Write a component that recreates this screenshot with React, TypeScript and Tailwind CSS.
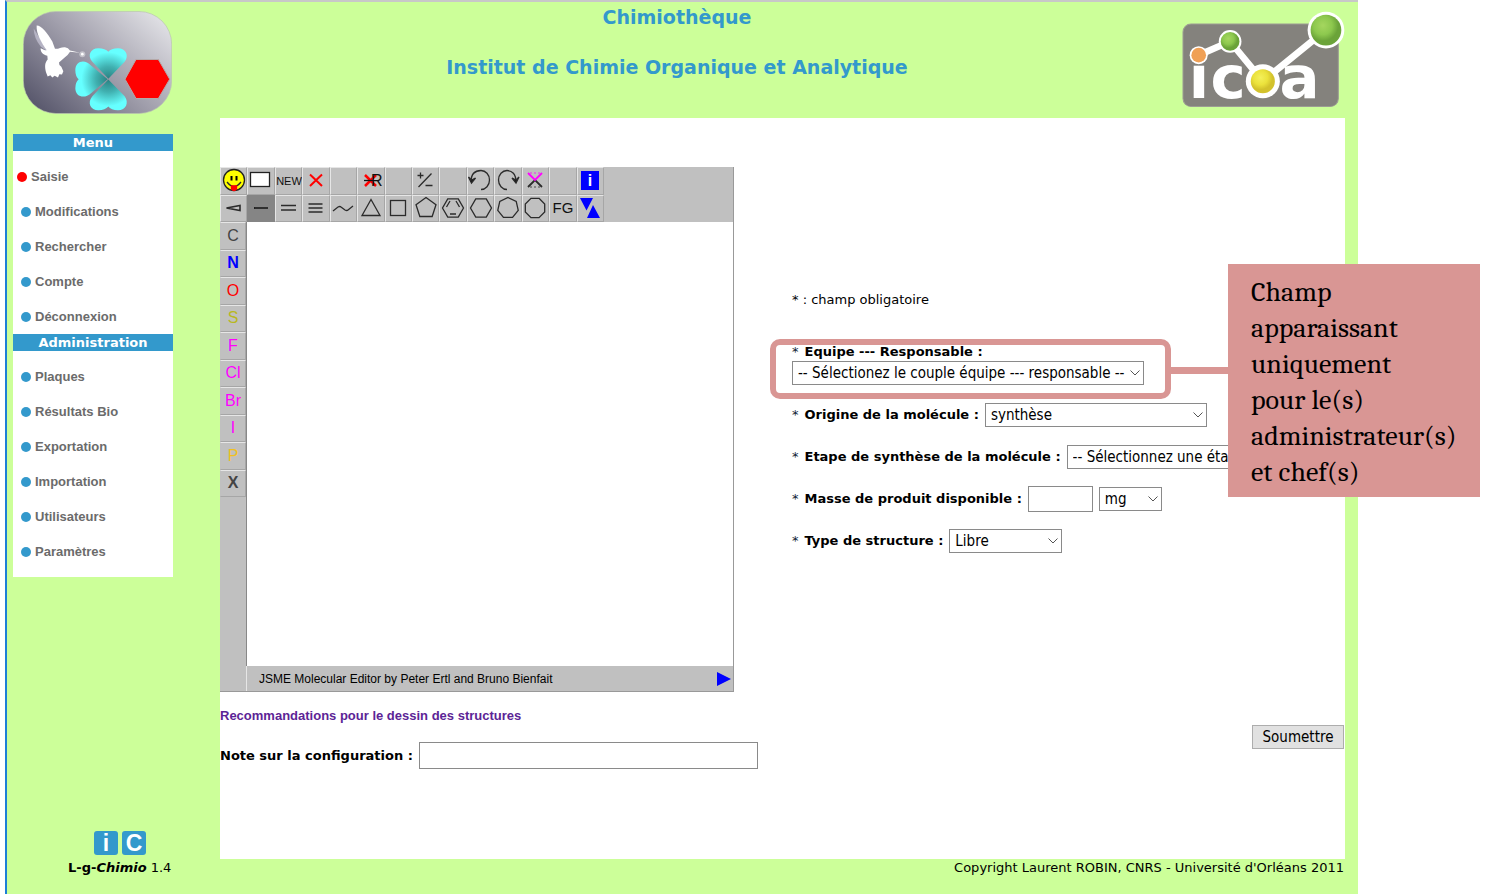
import type { ReactNode } from 'react';

const menuItems = ['Saisie', 'Modifications', 'Rechercher', 'Compte', 'Déconnexion'];
const adminItems = ['Plaques', 'Résultats Bio', 'Exportation', 'Importation', 'Utilisateurs', 'Paramètres'];

function BirdLogo() {
  return (
    <svg viewBox="69 36 447 308" className="h-[103px] w-[149px] shrink-0" role="img" aria-label="L-g-Chimio">
      <defs>
        <linearGradient id="plate" x1="0" y1="0.85" x2="1" y2="0.1">
          <stop offset="0" stopColor="#57566b" />
          <stop offset="0.5" stopColor="#a19fac" />
          <stop offset="1" stopColor="#e4e4e8" />
        </linearGradient>
        <radialGradient id="leaf" gradientUnits="userSpaceOnUse" cx="325" cy="240" r="95">
          <stop offset="0" stopColor="#2a7f80" />
          <stop offset="0.4" stopColor="#40b0b0" />
          <stop offset="0.85" stopColor="#66ffff" />
        </radialGradient>
      </defs>
      <rect x="70" y="37" width="445" height="306" rx="98" fill="url(#plate)" stroke="#b9c4b0" strokeWidth="2" />
      <path d="M101 88 Q102 118 122 142 L143 158 L116 112Z" fill="#b5b3c4" />
      <path
        d="M110 79 C122 78 143 101 157 127 L165 149 C177 150 183 143 195 144 Q205 145 210 154 L240 161 L210 158 Q203 170 194 175 L177 190 Q176 198 184 203 L190 216 L186 226 L178 225 L174 235 L164 230 L157 235 L151 228 L143 232 L138 219 C134 203 134 191 143 181 L142 170 C127 165 121 157 122 147 C130 151 136 154 140 153 C124 130 108 103 110 79Z"
        fill="#fff"
      />
      <circle cx="247" cy="165" r="9" fill="#fff" opacity="0.4" />
      <circle cx="247" cy="165" r="4" fill="#fff" />
      <g fill="url(#leaf)">
        <path d="M325 239 L277 188 C261 169 271 147 295 147 Q316 147 325 158 Q333 147 354 147 C378 147 388 169 374 188Z" />
        <path d="M325 241 L277 291 C261 310 271 333 295 333 Q316 333 325 322 Q333 333 354 333 C378 333 388 310 374 291Z" />
        <path d="M323 240 L273 199 C253 178 226 187 226 213 Q226 231 236 240 Q226 249 226 267 C226 292 253 301 273 282Z" />
      </g>
      <path d="M375 240 L408 181 H475 L509 240 L475 298 H408Z" fill="#f00" stroke="#b4a8a8" strokeWidth="3" />
    </svg>
  );
}

function IcoaLogo() {
  return (
    <svg viewBox="38 33 488 305" className="h-[102px] w-[163px] shrink-0" role="img" aria-label="ICOA">
      <defs>
        <radialGradient id="green" cx="0.4" cy="0.35"><stop offset="0" stopColor="#a5d65f" /><stop offset="0.6" stopColor="#8dc84e" /><stop offset="1" stopColor="#6ba339" /></radialGradient>
        <radialGradient id="yellow" cx="0.4" cy="0.35"><stop offset="0" stopColor="#f4f05a" /><stop offset="0.6" stopColor="#ebe23c" /><stop offset="1" stopColor="#d3c22c" /></radialGradient>
      </defs>
      <rect x="41" y="72" width="465" height="247" rx="24" fill="#84827d" stroke="#9c9c93" strokeWidth="3" />
      <g fill="#fff" fontFamily="DejaVu Sans" fontWeight="700" fontSize="178">
        <text x="58" y="292">i</text>
        <text x="123" y="292">c</text>
        <text x="330" y="292">a</text>
      </g>
      <path d="M88 165 L182 124 L280 243 L468 90" fill="none" stroke="#fff" strokeWidth="20" />
      <g fill="#fff">
        <circle cx="88" cy="165" r="27" />
        <circle cx="182" cy="124" r="34" />
        <circle cx="280" cy="243" r="51" />
        <circle cx="469" cy="90" r="55" />
      </g>
      <circle cx="88" cy="165" r="22" fill="#f0a055" />
      <circle cx="182" cy="124" r="28" fill="url(#green)" />
      <circle cx="280" cy="243" r="36" fill="url(#yellow)" />
      <circle cx="469" cy="90" r="46" fill="url(#green)" />
    </svg>
  );
}

function Ring({ sides, radius, turn = 0 }: { sides: number; radius: number; turn?: number }) {
  const points = Array.from({ length: sides }, (_, k) => {
    const a = ((turn + (360 * k) / sides - 90) * Math.PI) / 180;
    return `${(13 + radius * Math.cos(a)).toFixed(2)},${(13 + radius * Math.sin(a)).toFixed(2)}`;
  }).join(' ');
  return <polygon points={points} />;
}

const tools: { name: string; art: ReactNode }[] = [
  {
    name: 'Smiley',
    art: (
      <>
        <circle cx="13" cy="13" r="10.5" fill="#ff0" stroke="#222" />
        <path d="M10.5 9v4.500M15.500 9v4.500" strokeWidth="2" stroke="#000" />
        <path d="M6 15q7 9 14 0" />
        <path d="M10.500 19h5v3q-2.500 3-5 0z" fill="#f00" stroke="#f00" />
      </>
    ),
  },
  { name: 'Effacer la zone', art: <rect x="2.500" y="5.500" width="19" height="14" fill="#fff" stroke="#222" /> },
  { name: 'Nouveau', art: <text x="13" y="18" textAnchor="middle" fontSize="11" fill="#111" stroke="none">NEW</text> },
  { name: 'Supprimer', art: <path d="M7 7.500l12 11.500M19 7.500l-12 11.500" stroke="#f00" strokeWidth="2" /> },
  { name: 'Vide 1', art: null },
  {
    name: 'Supprimer R',
    art: (
      <>
        <path d="M7 8l11 11M18 8L7 19" stroke="#f00" strokeWidth="2.500" />
        <path d="M6 13.500h9" stroke="#111" />
        <text x="13" y="19" fontSize="16" fill="#111" stroke="none">R</text>
      </>
    ),
  },
  { name: 'Vide 2', art: null },
  { name: 'Charge', art: <path d="M4.500 8.500h6M7.500 5.500v6M18.500 6.500L5.500 20M12.500 18.500h7" /> },
  { name: 'Vide 3', art: null },
  { name: 'Annuler', art: <><path d="M3 15C3 7 7 3.500 13 3.500a8.500 9.500 0 0 1 0 19" /><path d="M0.500 10l3 6 4-5-4 2z" fill="#111" /></> },
  { name: 'Rétablir', art: <><path d="M21 15C21 7 17 3.500 12 3.500a8.500 9.500 0 0 0 0 19" /><path d="M24 10l-3 6-4-5 4 2z" fill="#111" /></> },
  { name: 'Spiro', art: <><path d="M6 20l7-7 7 7" strokeWidth="1.800" /><path d="M6 6l7 7 7-7" stroke="#f0f" strokeWidth="1.800" /><path d="M8 6h10" stroke="#f0f" strokeDasharray="2 2" strokeWidth="0.8" /><path d="M8 20h10" strokeDasharray="2 2" strokeWidth="0.8" /></> },
  { name: 'Vide 4', art: null },
  { name: 'Informations', art: <><rect x="4" y="4" width="18" height="19" fill="#00f" stroke="none" /><text x="13" y="19" textAnchor="middle" fontSize="16" fontWeight="700" fill="#fff" stroke="none">i</text></> },
  { name: 'Liaison stéréo', art: <path d="M5.500 13L19 10.500v5z" strokeWidth="1.600" /> },
  { name: 'Liaison simple', art: <path d="M6 13h14" stroke="#000" /> },
  { name: 'Liaison double', art: <path d="M5 10.500h15M5 15h15" /> },
  { name: 'Liaison triple', art: <path d="M5.500 9h14M5.500 13h14M5.500 17h14" /> },
  { name: 'Chaîne', art: <path d="M3 16l5-4q2-1 3 0l4 3q2 1 3 0l5-4" /> },
  { name: 'Cyclopropane', art: <path d="M13 4.500L22 20.500h-18z" /> },
  { name: 'Cyclobutane', art: <rect x="5.500" y="5.500" width="15" height="15" /> },
  { name: 'Cyclopentane', art: <Ring sides={5} radius={10.5} /> },
  { name: 'Benzène', art: <><Ring sides={6} radius={10.5} turn={30} /><path d="M6.500 12l3.500-6M16 6l3.500 6M10 19h6" /></> },
  { name: 'Cyclohexane', art: <Ring sides={6} radius={10.5} turn={30} /> },
  { name: 'Cycloheptane', art: <Ring sides={7} radius={10.5} /> },
  { name: 'Cyclooctane', art: <Ring sides={8} radius={10.5} turn={22.5} /> },
  { name: 'Groupe fonctionnel', art: <text x="13" y="18" textAnchor="middle" fontSize="15" fill="#111" stroke="none">FG</text> },
  { name: 'Transfert', art: <path d="M3 3h13L9.500 15.500zM16 10l7 13H10z" fill="#00f" stroke="none" /> },
];

function Tool({ name, art, active }: { name: string; art: ReactNode; active: boolean }) {
  return (
    <button
      type="button"
      aria-label={name}
      className={
        active
          ? 'flex items-center justify-center bg-[#858585]'
          : 'flex items-center justify-center border border-t-[#e6e6e6] border-l-[#e6e6e6] border-r-[#a6a6a6] border-b-[#a6a6a6] bg-[#c0c0c0]'
      }
    >
      <svg viewBox="0 0 26 27" className="h-[27px] w-[26px] shrink-0 font-['Liberation_Sans',sans-serif]" fill="none" stroke="#2b2b2b" strokeWidth="1.3">
        {art}
      </svg>
    </button>
  );
}

function Atom({ symbol, tone }: { symbol: string; tone: string }) {
  return (
    <button
      type="button"
      className={`flex items-center justify-center border border-t-[#e6e6e6] border-l-[#c0c0c0] border-r-[#a6a6a6] border-b-[#a6a6a6] font-['Liberation_Sans',sans-serif] text-base leading-4 ${tone}`}
    >
      {symbol}
    </button>
  );
}

function Editor() {
  return (
    <div className="w-[514px] border-r border-b border-[#999] bg-[#c0c0c0]">
      <div className="grid h-[55px] w-[384px] grid-cols-14 grid-rows-2">
        {tools.map((t) => (
          <Tool key={t.name} name={t.name} art={t.art} active={t.name === 'Liaison simple'} />
        ))}
      </div>
      <div className="flex h-[444px]">
        <div className="grid h-[275px] w-[26px] grid-rows-10">
          <Atom symbol="C" tone="text-[#444]" />
          <Atom symbol="N" tone="font-bold text-[#00f]" />
          <Atom symbol="O" tone="text-[#f00]" />
          <Atom symbol="S" tone="text-[#b8b820]" />
          <Atom symbol="F" tone="text-[#f0f]" />
          <Atom symbol="Cl" tone="text-[#f0f]" />
          <Atom symbol="Br" tone="text-[#f0f]" />
          <Atom symbol="I" tone="text-[#f0f]" />
          <Atom symbol="P" tone="text-[#f0c020]" />
          <Atom symbol="X" tone="font-bold text-[#444]" />
        </div>
        <div className="flex-1 border-l border-[#888] bg-white" />
      </div>
      <div className="ml-[26px] flex h-[25px] items-center justify-between border-l border-[#e6e6e6] pr-0.5 pl-3">
        <span className="font-['Liberation_Sans',sans-serif] text-xs">JSME Molecular Editor by Peter Ertl and Bruno Bienfait</span>
        <svg viewBox="0 0 14 14" className="size-3.5"><path d="M0 0l14 7-14 7z" fill="#00f" /></svg>
      </div>
    </div>
  );
}

function Select({ id, options, width, label }: { id: string; options: string[]; width: string; label?: string }) {
  return (
    <span className={`inline-grid items-center ${width}`}>
      <select
        id={id}
        aria-label={label}
        className="col-start-1 row-start-1 h-6 w-full appearance-none border border-[#8a8a8a] bg-white pl-[5px] font-['DejaVu_Sans_Condensed','DejaVu_Sans',sans-serif] text-[15px] leading-5 [font-stretch:condensed]"
      >
        {options.map((o) => (
          <option key={o}>{o}</option>
        ))}
      </select>
      <svg viewBox="0 0 10 6" className="pointer-events-none col-start-1 row-start-1 mr-1 h-1.5 w-2.5 justify-self-end" fill="none" stroke="#555">
        <path d="M0.500 0.500L5 5 9.500 0.500" />
      </svg>
    </span>
  );
}

function FieldLabel({ htmlFor, children }: { htmlFor: string; children: ReactNode }) {
  return (
    <label htmlFor={htmlFor} className="flex gap-1.5 whitespace-nowrap">
      <span className="text-[#123]">*</span>
      <b>{children}</b>
    </label>
  );
}

function MenuSection({ title, items, current }: { title: string; items: string[]; current?: string }) {
  return (
    <section>
      <h2 className="h-[17px] bg-[#3399cc] text-center leading-[18px] font-bold text-white">{title}</h2>
      <ul className="pt-2">
        {items.map((item) => (
          <li key={item} className={item === current ? 'flex h-[35px] items-center pl-1' : 'flex h-[35px] items-center pl-2'}>
            <a href="#" className="flex items-center gap-1 font-['Liberation_Sans',sans-serif] leading-4 font-bold text-[#6b6b6b]">
              <span className={item === current ? 'size-2.5 rounded-full bg-[#f00]' : 'size-2.5 rounded-full bg-[#3399cc]'} />
              {item}
            </a>
          </li>
        ))}
      </ul>
    </section>
  );
}

export default function App() {
  return (
    <div className="min-h-screen overflow-x-hidden bg-white pr-[132px] pl-[5px] font-['DejaVu_Sans',sans-serif] text-[13px] leading-[18px] text-black">
      <div className="flex min-h-screen flex-col border-t-2 border-l-2 border-t-[#c8c8c8] border-l-[#1c7fd6] bg-[#ccff99]">
        <header className="flex h-[116px] items-start justify-between pt-[9px] pr-[13px] pl-4">
          <BirdLogo />
          <div className="-mt-1.5 flex flex-col gap-[26px] text-center text-[19px] leading-6 font-bold text-[#3399cc]">
            <h1>Chimiothèque</h1>
            <p>Institut de Chimie Organique et Analytique</p>
          </div>
          <IcoaLogo />
        </header>

        <div className="flex flex-1 pr-[13px] pl-1.5">
          <aside className="mr-[47px] flex w-40 shrink-0 flex-col justify-between pt-4">
            <nav className="bg-white pb-2">
              <MenuSection title="Menu" items={menuItems} current="Saisie" />
              <MenuSection title="Administration" items={adminItems} />
            </nav>
            <div className="mb-1 flex w-[106px] justify-center gap-1 self-end font-['Liberation_Sans',sans-serif] text-[23px] leading-6 font-bold text-white">
              <a href="#" className="size-6 rounded-[3px] bg-[#3399cc] text-center">i</a>
              <a href="#" className="size-6 rounded-[3px] bg-[#3399cc] text-center">C</a>
            </div>
          </aside>

          <main className="flex-1 bg-white pt-[49px]">
            <form className="flex">
              <div className="w-[538px] shrink-0">
                <Editor />
                <a href="#" className="mt-[15px] block font-['Liberation_Sans',sans-serif] font-bold text-[#5c2496]">
                  Recommandations pour le dessin des structures
                </a>
                <div className="mt-[17px] flex items-center gap-1.5">
                  <label htmlFor="note" className="font-bold whitespace-nowrap">Note sur la configuration :</label>
                  <input id="note" type="text" className="h-[27px] min-w-0 flex-1 border border-[#8a8a8a] bg-white px-1" />
                </div>
              </div>

              <div className="ml-[34px] flex min-w-0 flex-1 flex-col pt-[124px] pb-5">
                <p>* : champ obligatoire</p>
                <div className="relative mt-[34px] flex w-[352px] flex-col">
                  <FieldLabel htmlFor="equipe">Equipe --- Responsable :</FieldLabel>
                  <Select id="equipe" width="w-full" options={['-- Sélectionez le couple équipe --- responsable --']} />
                  <div className="pointer-events-none absolute -top-1 -right-[27px] -bottom-3.5 -left-[22px] rounded-[10px] border-6 border-[#d99694]" />
                  <div className="absolute top-6 left-[379px] h-[7px] w-[57px] bg-[#d99694]" />
                  <p className="absolute -top-[79px] left-[436px] z-10 h-[233px] w-[252px] bg-[#d99694] pt-2.5 pl-[23px] font-[Cambria,Caladea,'Liberation_Serif',serif] text-[28px] leading-9">
                    Champ
                    <br />
                    apparaissant
                    <br />
                    uniquement
                    <br />
                    pour le(s)
                    <br />
                    administrateur(s)
                    <br />
                    et chef(s)
                  </p>
                </div>
                <div className="mt-[9px] flex h-[42px] items-center gap-1.5">
                  <FieldLabel htmlFor="origine">Origine de la molécule :</FieldLabel>
                  <Select id="origine" width="w-[222px]" options={['synthèse']} />
                </div>
                <div className="flex h-[42px] items-center gap-1.5">
                  <FieldLabel htmlFor="etape">Etape de synthèse de la molécule :</FieldLabel>
                  <Select id="etape" width="w-[222px]" options={['-- Sélectionnez une étape --']} />
                </div>
                <div className="flex h-[42px] items-center gap-1.5">
                  <FieldLabel htmlFor="masse">Masse de produit disponible :</FieldLabel>
                  <input id="masse" type="text" className="h-[26px] w-[65px] border border-[#8a8a8a] bg-white px-1" />
                  <Select id="unite" label="Unité" width="w-[63px]" options={['mg']} />
                </div>
                <div className="flex h-[42px] items-center gap-1.5">
                  <FieldLabel htmlFor="type">Type de structure :</FieldLabel>
                  <Select id="type" width="w-[113px]" options={['Libre']} />
                </div>
                <button type="submit" className="mt-auto mr-px h-6 w-[92px] self-end border border-[#adadad] bg-[#e1e1e1] font-['DejaVu_Sans_Condensed','DejaVu_Sans',sans-serif] text-[15px] leading-5 [font-stretch:condensed]">
                  Soumettre
                </button>
              </div>
            </form>
          </main>
        </div>

        <footer className="flex h-[35px] justify-between pr-3.5 pl-[61px]">
          <p><b>L-g-<i>Chimio</i></b> 1.4</p>
          <p>Copyright Laurent ROBIN, CNRS - Université d'Orléans 2011</p>
        </footer>
      </div>
    </div>
  );
}
